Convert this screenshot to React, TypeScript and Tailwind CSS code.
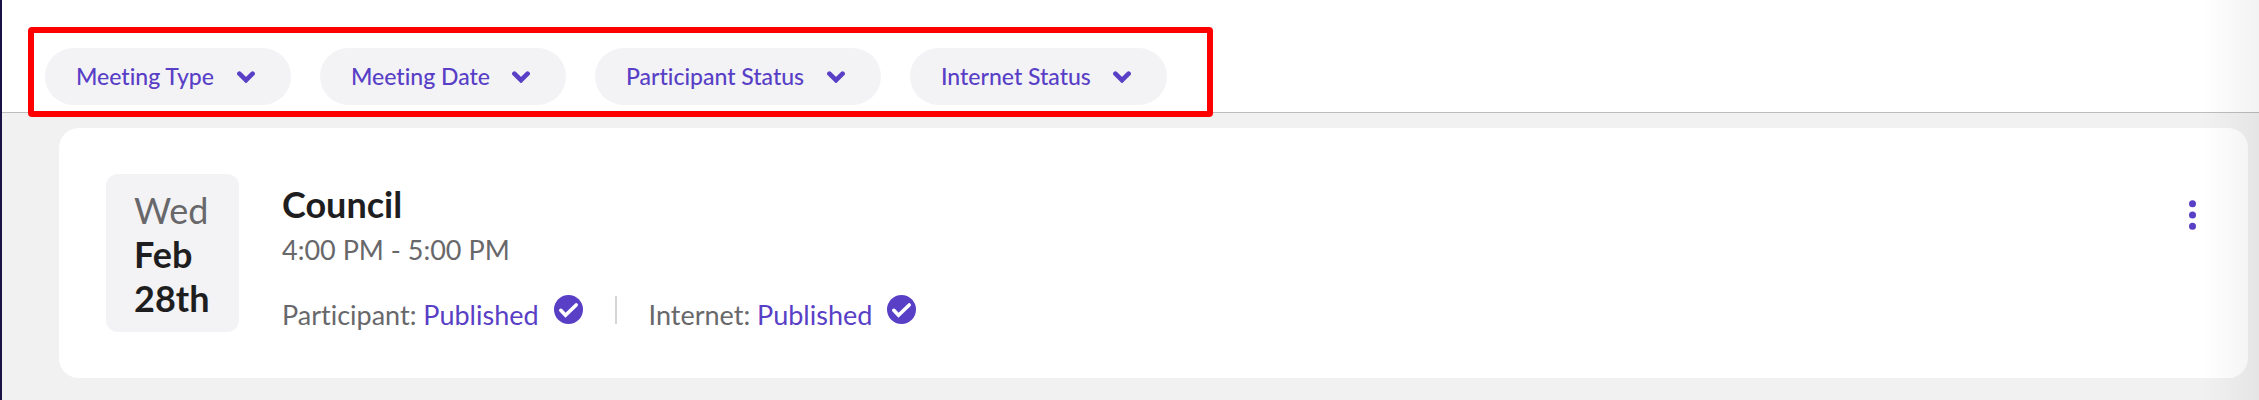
const filters = ['Meeting Type', 'Meeting Date', 'Participant Status', 'Internet Status']

function Chevron() {
    return (
        <svg className="pointer-events-none w-[18px] h-3 shrink-0" viewBox="0 0 18 12" fill="none" aria-hidden="true">
            <path d="M2.4 2.6 9 9.2l6.6-6.6" stroke="#583fc6" strokeWidth="4.6" strokeLinecap="round" />
        </svg>
    )
}

function CheckCircle() {
    return (
        <svg className="size-[29px] shrink-0" viewBox="0 0 29 29" fill="none" aria-hidden="true">
            <circle cx="14.5" cy="14.5" r="14.5" fill="#583fc6" />
            <path d="m6.8 15.3 4.7 4.9L22.2 10" stroke="#fff" strokeWidth="3.6" strokeLinecap="round" />
        </svg>
    )
}

function Filter({ name }: { name: string }) {
    return (
        <label className="flex items-center h-[57px] pl-[31px] pr-9 gap-[22px] rounded-full bg-[#f3f3f6] text-[#583fc6]">
            <select aria-label={name} className="appearance-none bg-transparent text-[23px] font-medium outline-none cursor-pointer">
                <option>{name}</option>
            </select>
            <Chevron />
        </label>
    )
}

function Status({ label, value }: { label: string, value: string }) {
    return (
        <div className="flex items-start">
            <p className="pt-1 text-[27px] leading-8 text-[#68686b]">
                {label}: <a href="#" className="text-[#583fc6]">{value}</a>
            </p>
            <span className="ml-[15px]">
                <CheckCircle />
            </span>
        </div>
    )
}

function MeetingCard() {
    return (
        <article className="flex items-start rounded-[20px] bg-white pl-[47px] pr-12 py-[46px]">
            <div className="w-[133px] h-[158px] px-7 py-[14px] rounded-xl bg-[#f3f3f6] text-4xl leading-[44px]">
                <p className="text-[#68686b]">Wed</p>
                <p className="font-bold text-[#1e1e21]">Feb</p>
                <p className="font-bold text-[#1e1e21]">28th</p>
            </div>
            <div className="ml-[43px] pt-2 flex-1">
                <h2 className="text-4xl leading-[44px] font-bold text-[#1e1e21]">Council</h2>
                <p className="mt-2 text-[27px] leading-8 text-[#68686b]">4:00 PM - 5:00 PM</p>
                <div className="mt-[29px] flex items-start">
                    <Status label="Participant" value="Published" />
                    <div className="w-[2px] h-7 mx-8 mt-px bg-[#d5d3d8]" />
                    <Status label="Internet" value="Published" />
                </div>
            </div>
            <button aria-label="Meeting options" className="mt-[26px] px-1 cursor-pointer">
                <svg className="w-[7px] h-[30px]" viewBox="0 0 7 30" fill="#583fc6" aria-hidden="true">
                    <circle cx="3.5" cy="3.8" r="3.5" />
                    <circle cx="3.5" cy="15" r="3.5" />
                    <circle cx="3.5" cy="26.2" r="3.5" />
                </svg>
            </button>
        </article>
    )
}

export default function App() {
    return (
        <div className="relative min-h-screen flex flex-col border-l-2 border-[#1b1145] bg-[#f1f1f1] font-['Lato',sans-serif] [font-variant-ligatures:none]">
            <header className="flex bg-white border-b border-[#bdbdbd] pt-12 pb-[7px] pl-[43px]">
                <div className="relative flex gap-[29px]">
                    {filters.map((name) => <Filter key={name} name={name} />)}
                    <div className="pointer-events-none absolute -left-[17px] -top-[21px] -right-[46px] -bottom-3 border-[6px] border-[#ff0000] rounded-sm" />
                </div>
            </header>
            <main className="pt-[15px] pl-[57px] pr-[11px] pb-[22px]">
                <MeetingCard />
            </main>
            <div className="pointer-events-none absolute inset-y-0 right-0 w-14 bg-linear-to-r from-transparent to-black/5" />
        </div>
    )
}
